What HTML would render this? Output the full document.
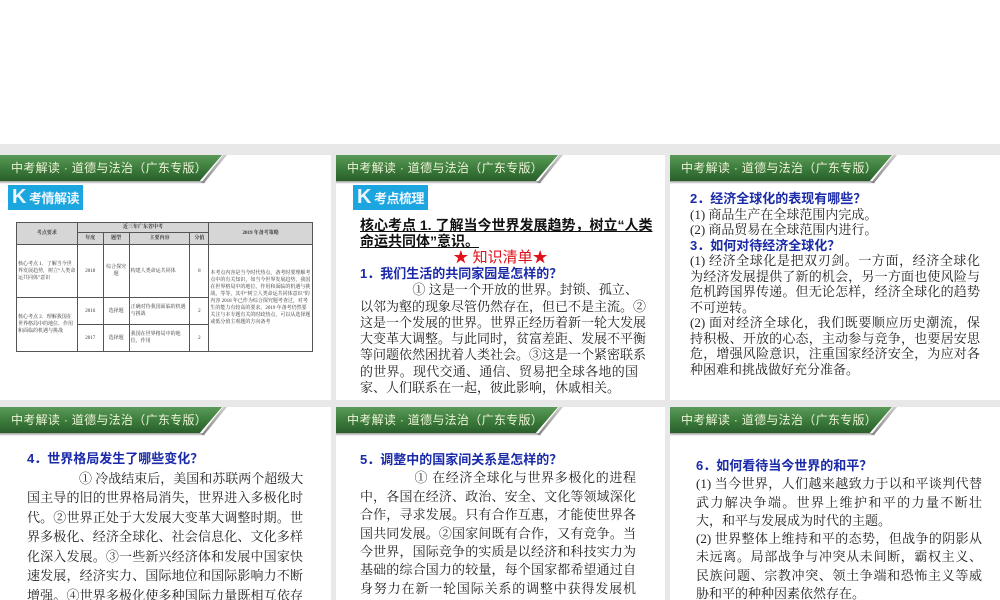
<!DOCTYPE html>
<html><head><meta charset="utf-8"><style>
*{margin:0;padding:0;box-sizing:border-box}
body{width:1000px;height:600px;background:#fff;position:relative;overflow:hidden;font-family:"Liberation Serif","Noto Serif CJK SC",serif}
.bg{position:absolute;left:0;top:144px;width:1000px;height:456px;background:#e8e8e8}
.p{position:absolute;background:#fff;overflow:hidden}
.hd{position:absolute;left:0;top:0;width:222px;height:26px;background:linear-gradient(#5b9a58,#3a7a3a 55%,#2a5e2c);clip-path:polygon(0 0,100% 0,90% 100%,0 100%);color:#eef3d8;font:12px "Liberation Sans","Noto Sans CJK SC",sans-serif;line-height:26px;padding-left:11px;letter-spacing:.3px;white-space:nowrap}
.sl{position:absolute;left:201px;top:0;width:26px;height:28px;background:linear-gradient(#ccc,#888);clip-path:polygon(85% 0,100% 0,12% 100%,0 100%)}
.sh{position:absolute;left:0;top:26px;width:205px;height:3px;background:linear-gradient(#9a9a9a,#fff)}
.k{position:absolute;left:8px;top:30px;width:75px;height:25px;background:#1ca6e0;color:#eef6ff;font:bold 13px "Liberation Sans","Noto Sans CJK SC",sans-serif;line-height:25px;padding-left:4px;white-space:nowrap;letter-spacing:-.5px}
.k b{font-size:20px;margin-right:3px}
.t{position:absolute;font-size:13px;color:#222}
.t div{text-align:justify;text-align-last:justify;white-space:nowrap;overflow:visible}
.t div.l{text-align-last:left}
.t .q{color:#1a2aa8;font-weight:bold;font-family:"Liberation Sans","Noto Sans CJK SC",sans-serif;text-align-last:left}
table{position:absolute;left:16px;top:67px;width:297px;border-collapse:collapse;font-size:5px;color:#333;line-height:7px}
td{border:1px solid #555;text-align:center;padding:1px}
.g td{background:#d6d6d6;font-weight:bold}
</style></head><body>
<div class="bg"></div>

<div class="p" style="left:0;top:155px;width:331px;height:245px">
<div class="sh"></div><div class="hd">中考解读 · 道德与法治（广东专版）</div><div class="sl"></div>
<div class="k"><b>K</b>考情解读</div>
<table>
<tr class="g" style="height:9px"><td rowspan="2" style="width:61px">考点要求</td><td colspan="4">近三年广东省中考</td><td rowspan="2" style="width:104px">2019 年备考策略</td></tr>
<tr class="g" style="height:12px"><td style="width:26px">年度</td><td style="width:26px">题型</td><td style="width:61px">主要内容</td><td style="width:19px">分值</td></tr>
<tr style="height:53px"><td style="text-align:left">核心考点 1．了解当今世界发展趋势，树立“人类命运共同体”意识</td><td>2018</td><td>综合探究题</td><td style="text-align:left">构建人类命运共同体</td><td>8</td><td rowspan="3" style="text-align:left">本考点内容是当今时代热点，备考时要理解考点中的有关知识，如当今世界发展趋势，我国在世界格局中的地位、作用和面临的机遇与挑战，等等。其中“树立人类命运共同体意识”的内容 2018 年已作为综合探究题考查过，对考生的能力有较高的要求。2019 年备考仍然要关注与本专题有关的时政热点，可以从选择题或低分值主观题的方向备考</td></tr>
<tr style="height:27px"><td rowspan="2" style="text-align:left">核心考点 2．理解我国在世界格局中的地位、作用和面临的机遇与挑战</td><td>2016</td><td>选择题</td><td style="text-align:left">正确对待我国面临的机遇与挑战</td><td>2</td></tr>
<tr style="height:27px"><td>2017</td><td>选择题</td><td style="text-align:left">我国在世界格局中的地位、作用</td><td>2</td></tr>
</table>
</div>

<div class="p" style="left:336px;top:155px;width:329px;height:245px">
<div class="sh"></div><div class="hd">中考解读 · 道德与法治（广东专版）</div><div class="sl"></div>
<div class="k" style="left:17px"><b>K</b>考点梳理</div>
<div class="t" style="left:24px;top:62px;width:278px;font-size:14px;font-weight:bold;line-height:16px;text-decoration:underline;font-family:'Liberation Sans','Noto Sans CJK SC',sans-serif;color:#111"><div>核心考点 1. 了解当今世界发展趋势，树立“人类</div><div class="l">命运共同体”意识。</div></div>
<div style="position:absolute;left:0;width:329px;top:91px;text-align:center;color:#e0101a;font:15px 'Liberation Sans','Noto Sans CJK SC',sans-serif">★ 知识清单★</div>
<div class="t" style="left:24px;top:111px;width:278px;line-height:16.3px">
<div class="q">1．我们生活的共同家园是怎样的？</div>
<div>　　　　① 这是一个开放的世界。封锁、孤立、</div>
<div>以邻为壑的现象尽管仍然存在，但已不是主流。②</div>
<div>这是一个发展的世界。世界正经历着新一轮大发展</div>
<div>大变革大调整。与此同时，贫富差距、发展不平衡</div>
<div>等问题依然困扰着人类社会。③这是一个紧密联系</div>
<div>的世界。现代交通、通信、贸易把全球各地的国</div>
<div class="l">家、人们联系在一起，彼此影响，休戚相关。</div>
</div>
</div>

<div class="p" style="left:670px;top:155px;width:330px;height:245px">
<div class="sh"></div><div class="hd">中考解读 · 道德与法治（广东专版）</div><div class="sl"></div>
<div class="t" style="left:20px;top:36px;width:290px;line-height:15.5px">
<div class="q">2．经济全球化的表现有哪些？</div>
<div class="l">(1) 商品生产在全球范围内完成。</div>
<div class="l">(2) 商品贸易在全球范围内进行。</div>
<div class="q">3．如何对待经济全球化？</div>
<div>(1) 经济全球化是把双刃剑。一方面，经济全球化</div>
<div>为经济发展提供了新的机会，另一方面也使风险与</div>
<div>危机跨国界传递。但无论怎样，经济全球化的趋势</div>
<div class="l">不可逆转。</div>
<div>(2) 面对经济全球化，我们既要顺应历史潮流，保</div>
<div>持积极、开放的心态，主动参与竞争，也要居安思</div>
<div>危，增强风险意识，注重国家经济安全，为应对各</div>
<div class="l">种困难和挑战做好充分准备。</div>
</div>
</div>

<div class="p" style="left:0;top:407px;width:331px;height:193px">
<div class="sh"></div><div class="hd">中考解读 · 道德与法治（广东专版）</div><div class="sl"></div>
<div class="t" style="left:27px;top:42px;width:276px;line-height:19.5px">
<div class="q">4．世界格局发生了哪些变化？</div>
<div>　　　　① 冷战结束后，美国和苏联两个超级大</div>
<div>国主导的旧的世界格局消失，世界进入多极化时</div>
<div>代。②世界正处于大发展大变革大调整时期。世</div>
<div>界多极化、经济全球化、社会信息化、文化多样</div>
<div>化深入发展。③一些新兴经济体和发展中国家快</div>
<div>速发展，经济实力、国际地位和国际影响力不断</div>
<div>增强。④世界多极化使多种国际力量既相互依存</div>
</div>
</div>
<div class="p" style="left:336px;top:407px;width:329px;height:193px">
<div class="sh"></div><div class="hd">中考解读 · 道德与法治（广东专版）</div><div class="sl"></div>
<div class="t" style="left:24px;top:44px;width:276px;line-height:18.4px">
<div class="q">5．调整中的国家间关系是怎样的？</div>
<div>　　　　① 在经济全球化与世界多极化的进程</div>
<div>中，各国在经济、政治、安全、文化等领域深化</div>
<div>合作，寻求发展。只有合作互惠，才能使世界各</div>
<div>国共同发展。②国家间既有合作，又有竞争。当</div>
<div>今世界，国际竞争的实质是以经济和科技实力为</div>
<div>基础的综合国力的较量，每个国家都希望通过自</div>
<div>身努力在新一轮国际关系的调整中获得发展机</div>
</div>
</div>
<div class="p" style="left:670px;top:407px;width:330px;height:193px">
<div class="sh"></div><div class="hd">中考解读 · 道德与法治（广东专版）</div><div class="sl"></div>
<div class="t" style="left:26px;top:50px;width:286px;line-height:18.3px">
<div class="q">6．如何看待当今世界的和平？</div>
<div>(1) 当今世界，人们越来越致力于以和平谈判代替</div>
<div>武力解决争端。世界上维护和平的力量不断壮</div>
<div class="l">大，和平与发展成为时代的主题。</div>
<div>(2) 世界整体上维持和平的态势，但战争的阴影从</div>
<div>未远离。局部战争与冲突从未间断，霸权主义、</div>
<div>民族问题、宗教冲突、领土争端和恐怖主义等威</div>
<div class="l">胁和平的种种因素依然存在。</div>
</div>
</div>
</body></html>
